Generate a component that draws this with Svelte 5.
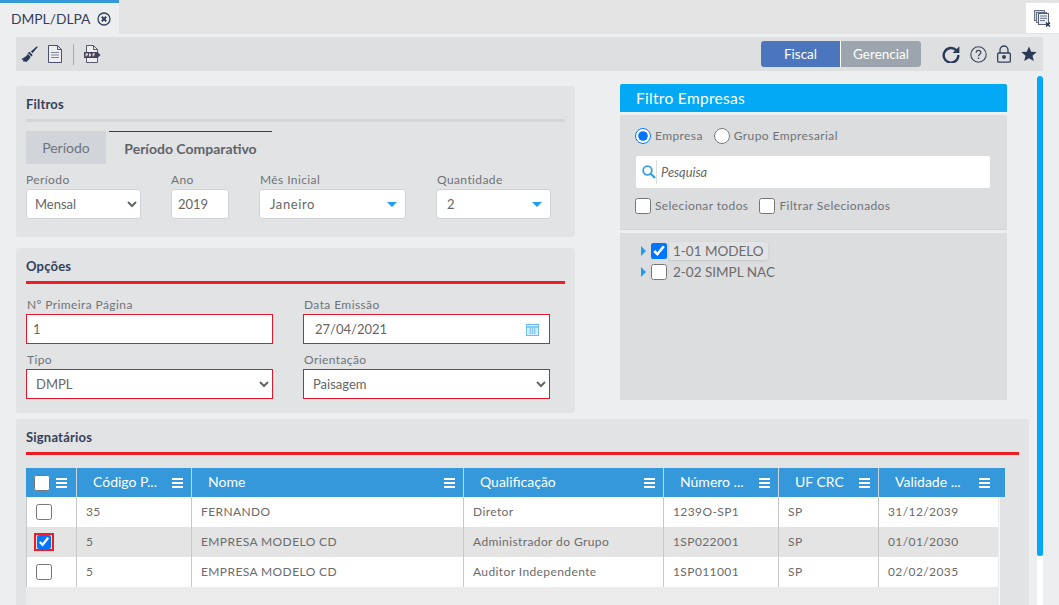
<script>
  const cols = [
    { label: 'Código P...', w: 115 },
    { label: 'Nome', w: 272 },
    { label: 'Qualificação', w: 200 },
    { label: 'Número ...', w: 115 },
    { label: 'UF CRC', w: 100 },
    { label: 'Validade ...', w: 127 }
  ];
  const rows = [
    { sel: false, c: ['35', 'FERNANDO', 'Diretor', '1239O-SP1', 'SP', '31/12/2039'] },
    { sel: true, c: ['5', 'EMPRESA MODELO CD', 'Administrador do Grupo', '1SP022001', 'SP', '01/01/2030'] },
    { sel: false, c: ['5', 'EMPRESA MODELO CD', 'Auditor Independente', '1SP011001', 'SP', '02/02/2035'] }
  ];
</script>

<div class="page">
  <header class="tabbar">
    <div class="tab">
      <span>DMPL/DLPA</span>
      <svg width="14" height="14" viewBox="0 0 14 14" fill="none" stroke="#34405a"><circle cx="7" cy="7" r="6" stroke-width="1.300"/><path d="M4.800 4.800l4.400 4.400M9.200 4.800l-4.400 4.400" stroke-width="2"/></svg>
    </div>
    <button class="closeall" aria-label="Fechar abas">
      <svg width="17" height="17" viewBox="0 0 17 17" fill="none" stroke="#6a7488" stroke-width="1">
        <rect x="0.500" y="0.500" width="10" height="10" fill="#c7d6ea"/>
        <rect x="2.500" y="2.500" width="10" height="10" fill="#d7e2ef"/>
        <rect x="4.500" y="3.500" width="10" height="11" fill="#eef1f4" stroke="#59627a"/>
        <path d="M6 6h7M6 8.300h7M6 10.600h5" stroke="#6a7488"/>
        <path d="M12 12.500l4 4M16 12.500l-4 4" stroke="#2a3648" stroke-width="1.500"/>
      </svg>
    </button>
  </header>

  <div class="content">
    <div class="toolbar">
      <div class="tools">
        <svg width="17" height="17" viewBox="0 0 17 17" fill="#2a3a58"><path d="M16.800 1.100l-.9-.9-6.100 5.300 1.700 1.700z"/><path d="M8.300 5.700l3.400 3.300-1.300 1.500-3.500-3.400z"/><path d="M6.300 7.600l3.300 3.200c-.6 2.200-2.600 4.200-4.600 5.400l-1-1.300-.8 1.100-1.300-1 .9-1.400-1.300.5-1-1.200c2.400-.7 5.300-2.900 6.800-5.300z"/></svg>
        <svg width="14" height="18" viewBox="0 0 14 18" fill="none" stroke="#4a4f72" stroke-width="1"><path d="M.5.500h9l4 4v13h-13z" fill="#eceef0"/><path d="M9.500.500v4h4" /><path d="M3 7.500h8M3 10h8M3 12.500h8" stroke="#7c8290"/></svg>
        <span class="sep"></span>
        <svg width="17" height="18" viewBox="0 0 17 18" fill="none"><path d="M2.500.500h7l4 4v13h-11z" fill="#eceef0" stroke="#55596e"/><path d="M9.500.500v4h4" stroke="#55596e"/><rect x="0" y="7" width="13" height="6" fill="#4a3f58"/><path d="M13 6.500l3.500 3.500-3.500 3.500z" fill="#3c4658"/><path d="M2 8.500v3M2 8.800h1.500v1.300H2M5.500 8.500v3M5.500 8.800c1.600 0 1.600 2.400 0 2.400M9 8.500v3M9 8.800h2M9 10h1.500" stroke="#fff" stroke-width=".8"/></svg>
      </div>
      <div class="right-tools">
        <div class="seg">
          <button class="on">Fiscal</button>
          <button>Gerencial</button>
        </div>
        <div class="icons">
          <svg width="18" height="18" viewBox="0 0 18 18" fill="none"><path d="M14.400 5.400A7.300 7.300 0 1 0 16.300 10" stroke="#2a3a58" stroke-width="2.400"/><path d="M17.400 1.200v6.800h-6.800z" fill="#2a3a58"/></svg>
          <svg width="17" height="17" viewBox="0 0 17 17" fill="none" stroke="#3a4558"><circle cx="8.500" cy="8.500" r="7.700" stroke-width="1.100"/><path d="M6.200 6.700c0-3 4.700-3 4.700-.2 0 1.800-2.400 1.700-2.400 3.700" stroke-width="1.200"/><path d="M8.500 11.500v1.500" stroke-width="1.300"/></svg>
          <svg width="14" height="18" viewBox="0 0 14 18" fill="none" stroke="#34405a" stroke-width="1.300"><path d="M3 8V5a4 4 0 0 1 8 0v3"/><rect x=".7" y="8" width="12.600" height="9.200" rx="1"/><circle cx="7" cy="12" r="1.300" fill="#34405a"/></svg>
          <svg width="16" height="16" viewBox="0 0 16 16" fill="#2a3a58"><path d="M8 .6l2.200 5.100 5.500.4-4.200 3.600 1.300 5.400L8 12.200l-4.800 2.900 1.300-5.400L.3 6.100l5.500-.4z"/></svg>
        </div>
      </div>
    </div>

    <div class="columns">
      <div class="left">
        <section class="panel filtros">
          <h2 class="title gray">Filtros</h2>
          <div class="subtabs">
            <div class="subtab">Período</div>
            <div class="subtab active">Período Comparativo</div>
          </div>
          <div class="row-filtros">
            <label class="f1">Período
              <select class="ctl"><option>Mensal</option></select>
            </label>
            <label class="f2">Ano
              <input class="ctl" value="2019" />
            </label>
            <div class="fld f3 nudge"><span>Mês Inicial</span>
              <div class="ctl drop">Janeiro<i></i></div>
            </div>
            <div class="fld f4 nudge"><span>Quantidade</span>
              <div class="ctl drop">2<i></i></div>
            </div>
          </div>
        </section>

        <section class="panel opcoes">
          <h2 class="title red">Opções</h2>
          <div class="grid-opcoes">
            <label class="nudge">Nº Primeira Página
              <input class="ctl req" value="1" />
            </label>
            <div class="fld nudge"><span>Data Emissão</span>
              <div class="ctl req date">27/04/2021
                <svg width="13" height="13" viewBox="0 0 13 13" fill="#dff0fc" stroke="#6dbdf3"><rect x=".5" y="1.500" width="12" height="11"/><path d="M.5 4h12" stroke-width="1.500"/><path d="M3 .5v2M10 .5v2" /><path d="M2.500 6h8M2.500 8h8M2.500 10h8M4.500 5v6.500M6.500 5v6.500M8.500 5v6.500" stroke-width=".6"/></svg>
              </div>
            </div>
            <label class="nudge">Tipo
              <select class="ctl req"><option>DMPL</option></select>
            </label>
            <label class="nudge">Orientação
              <select class="ctl req"><option>Paisagem</option></select>
            </label>
          </div>
        </section>
      </div>

      <aside class="right">
        <div class="emp-head">Filtro Empresas</div>
        <div class="emp-top">
          <div class="opts">
            <label><input type="radio" name="emp" checked />Empresa</label>
            <label><input type="radio" name="emp" />Grupo Empresarial</label>
          </div>
          <div class="search">
            <svg width="14" height="14" viewBox="0 0 14 14" fill="none"><circle cx="5.500" cy="5.500" r="4.300" stroke="#3a9bea" stroke-width="1.800"/><path d="M8.800 8.800l4.200 4.200" stroke="#3a9bea" stroke-width="2.200"/></svg>
            <em>Pesquisa</em>
          </div>
          <div class="opts checks">
            <label><input type="checkbox" />Selecionar todos</label>
            <label><input type="checkbox" />Filtrar Selecionados</label>
          </div>
        </div>
        <div class="emp-tree">
          <div class="node"><i></i><input type="checkbox" checked /><span class="hl">1-01 MODELO</span></div>
          <div class="node"><i></i><input type="checkbox" /><span>2-02 SIMPL NAC</span></div>
        </div>
      </aside>
    </div>

    <section class="panel sign">
      <h2 class="title red">Signatários</h2>
      <div class="table">
        <div class="thead">
          <div class="th first"><input type="checkbox" /><span class="menu"></span></div>
          {#each cols as c}
            <div class="th" style="width:{c.w}px"><b>{c.label}</b><span class="menu"></span></div>
          {/each}
        </div>
        <div class="tbody">
          {#each rows as r}
            <div class="tr" class:alt={r.sel}>
              <div class="td first"><input type="checkbox" checked={r.sel} class:mark={r.sel} /></div>
              {#each r.c as v, i}
                <div class="td" style="width:{cols[i].w}px">{v}</div>
              {/each}
            </div>
          {/each}
        </div>
      </div>
    </section>
  </div>

  <div class="scroll"><div class="thumb"></div></div>
</div>

<style>
  :global(body) { margin: 0; background: #eceef0; overflow: hidden; }
  .page { position: relative; width: 1059px; height: 605px; overflow: hidden; font: 13px Lato, sans-serif; color: #6b6b6b; }
  .tabbar { display: flex; justify-content: space-between; height: 34px; background: #e4e4e4; }
  .tab { width: 119px; box-sizing: border-box; border-top: 3px solid #3498db; background: #eceef0; display: flex; align-items: center; gap: 7px; padding-left: 11px; font-size: 13.800px; color: #34405a; }
  .closeall { width: 33px; height: 30px; margin-top: 3px; border: 0; padding: 0; background: #fff; display: flex; align-items: center; justify-content: center; }
  .content { padding: 3px 0 0 16px; width: 1027px; }
  .toolbar { height: 34px; background: #dedfe0; display: flex; justify-content: space-between; align-items: center; padding: 0 6px 0 5px; box-sizing: border-box; }
  .tools { display: flex; align-items: center; gap: 10px; }
  .sep { width: 1px; height: 21px; background: #a9acb0; margin-left: 1px; }
  .right-tools { display: flex; align-items: center; gap: 21px; }
  .seg { display: flex; gap: 1px; background: #fff; border-radius: 3px; }
  .seg button { border: 0; height: 26px; width: 80px; background: #9ca5ad; color: #fff; font: 13.500px Lato, sans-serif; border-radius: 0 3px 3px 0; padding: 0; }
  .seg button.on { width: 79px; background: #4b76bd; border-radius: 3px 0 0 3px; }
  .icons { display: flex; align-items: center; gap: 10px; }
  .columns { display: flex; justify-content: space-between; width: 991px; margin-top: 13px; }
  .left { width: 559px; padding-top: 2px; display: flex; flex-direction: column; gap: 11px; }
  .panel { background: #e2e3e5; border-radius: 3px; padding: 10px 10px 0; box-sizing: border-box; }
  .title { margin: 0; font-size: 13px; line-height: 16px; font-weight: 700; color: #34405a; letter-spacing: .2px; }
  .title.gray { height: 23px; border-bottom: 3px solid #d3d5d7; }
  .title.red { height: 23px; border-bottom: 3px solid #ee1c25; }
  .filtros { height: 151px; }
  .subtabs { display: flex; margin-top: 9px; height: 33px; }
  .subtab { width: 80px; background: #d1d5d9; color: #6b7480; font-size: 14px; display: flex; align-items: center; justify-content: center; }
  .subtab.active { width: 163px; background: none; border-top: 1px solid #34405a; margin-left: 3px; font-weight: 700; font-size: 14px; color: #5f6368; box-sizing: border-box; }
  label, .fld { display: flex; flex-direction: column; gap: 3px; color: #6f7378; font-size: 12px; line-height: 12px; letter-spacing: .4px; }
  .nudge { padding-left: 1px; box-sizing: border-box; }
  .nudge .ctl { margin-left: -1px; width: calc(100% + 1px); }
  .row-filtros { display: flex; margin-top: 10px; }
  .f1 { width: 115px; margin-right: 30px; }
  .f2 { width: 58px; margin-right: 30px; }
  .f3 { width: 147px; margin-right: 30px; }
  .f4 { width: 115px; }
  .ctl { height: 30px; box-sizing: border-box; border: 1px solid #d0d2d5; border-radius: 3px; background: #fff; font: 13px Lato, sans-serif; color: #666; padding: 0 0 0 6px; width: 100%; outline: 0; letter-spacing: 0; }
  select.ctl { padding-left: 4px; }
  .drop { display: flex; align-items: center; justify-content: space-between; padding: 0 8px 0 10px; letter-spacing: .6px; }
  .drop i { width: 0; height: 0; border: 5px solid transparent; border-top: 5px solid #1e9ff2; border-bottom: 0; }
  .opcoes { height: 165px; }
  .grid-opcoes { display: grid; grid-template-columns: 247px 247px; column-gap: 30px; row-gap: 10px; margin-top: 15px; }
  .grid-opcoes .ctl { border-radius: 0; border: 1px solid #e3172a; height: 30px; }
  .grid-opcoes select.ctl { padding-left: 5px; }
  .date { display: flex; align-items: center; justify-content: space-between; padding: 0 10px 0 11px; }
  .right { width: 387px; }
  .emp-head { height: 28px; background: #03a9f4; color: #fff; font-size: 15.500px; line-height: 28px; padding-left: 16px; border-radius: 2px 2px 0 0; letter-spacing: .3px; }
  .emp-top { margin-top: 3px; height: 115px; background: #dcdddf; padding: 13px 15px 0; box-sizing: border-box; border-bottom: 1px solid #d2d3d5; }
  .opts { display: flex; gap: 11px; }
  .opts label { flex-direction: row; align-items: center; gap: 4px; line-height: 14px; }
  .opts input { margin: 0; width: 16px; height: 16px; }
  .search { margin-top: 12px; height: 32px; width: 354px; margin-left: 1px; background: #fff; border-radius: 2px; display: flex; align-items: center; font-size: 12.800px; color: #666; padding-left: 6px; box-sizing: border-box; }
  .search em { padding-left: 4px; border-left: 1px solid #ddd; line-height: 24px; }
  .checks { margin-top: 10px; }
  .emp-tree { margin-top: 3px; height: 167px; background: #dcdddf; padding: 7px 21px; box-sizing: border-box; }
  .node { display: flex; align-items: center; height: 21px; font-size: 13.500px; color: #6b6b6b; }
  .node i { width: 0; height: 0; border: 5px solid transparent; border-left: 5px solid #1e9ff2; border-right: 0; margin-right: 5px; }
  .node input { margin: 0 2px 0 0; width: 16px; height: 16px; }
  .node span { padding: 1px 4px; }
  .hl { background: #e2e3e5; box-shadow: 0 1px 3px rgba(0,0,0,.12); border-radius: 2px; }
  .sign { margin-top: 6px; width: 1013px; height: 200px; }
  .table { margin-top: 13px; width: 979px; }
  .thead { display: flex; height: 29px; background: #3498db; }
  .th { height: 29px; box-sizing: border-box; border-left: 1px solid #c9d6df; display: flex; align-items: center; justify-content: space-between; padding: 0 8px 0 16px; color: #fff; font-size: 14px; }
  .th:last-child { padding-right: 15px; }
  .th b { font-weight: 400; margin-bottom: 3px; }
  .th.first { width: 50px; border-left: 0; padding: 0 9px 0 8px; }
  .th input { margin: 0; width: 16px; height: 16px; }
  .menu { width: 11px; border-top: 2px solid #fff; border-bottom: 2px solid #fff; position: relative; flex: none; height: 6px; }
  .menu::after { content: ''; position: absolute; left: 0; right: 0; top: 2px; height: 2px; background: #fff; }
  .tbody { width: 974px; height: 150px; box-sizing: border-box; background: #ebebeb; border-right: 1px solid #f8f8f8; }
  .tr { display: flex; box-sizing: border-box; width: 972px; height: 30px; background: #fff; border-left: 1px solid #c8c8c8; }
  .tr.alt { background: #e4e4e4; }
  .tr .td:last-child { width: auto !important; flex: 1; }
  .td { box-sizing: border-box; border-left: 1px solid #c8c8c8; display: flex; align-items: center; padding: 0 0 1px 9px; font-size: 12px; letter-spacing: .4px; color: #6b6b6b; }
  .td.first { width: 49px; border-left: 0; padding: 0 0 0 9px; }
  .td input { margin: 0; width: 16px; height: 16px; }
  .td input.mark { height: 14px; outline: 2px solid #ee1c25; outline-offset: 0; border-radius: 0; }
  .scroll { position: absolute; left: 1037px; top: 76px; width: 6px; height: 529px; background: #fff; }
  .thumb { height: 480px; background: #03a9f4; border-radius: 3px 3px 2px 2px; }
</style>
